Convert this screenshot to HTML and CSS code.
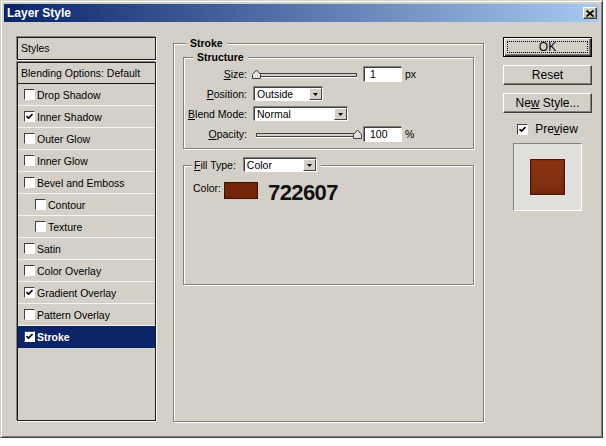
FILE: index.html
```html
<!DOCTYPE html>
<html>
<head>
    <meta charset="utf-8">
    <title>Layer Style</title>
    <link rel="stylesheet" href="styles.css">
</head>
<body>

    <div class="window">
        <div class="titlebar">
            <span class="title">Layer Style</span>
            <span class="closebtn">
                <svg width="8" height="7" viewBox="0 0 8 7"><path d="M0.5 0.5 L7.5 6.5 M7.5 0.5 L0.5 6.5" stroke="#000" stroke-width="1.7" fill="none"/></svg>
            </span>
        </div>

        <div class="main">
            <!-- left: list of effects -->
            <div class="leftcol">
                <div class="styleshead">Styles</div>
                <div class="stylelist">
                    <div class="blendrow">Blending Options: Default</div>
                    <div class="row"><span class="chk"></span>Drop Shadow</div>
                    <div class="row"><span class="chk"><svg width="7" height="7" viewBox="0 0 7 7"><path d="M0.5 3 L2.5 5 L6.5 1" fill="none" stroke="#000" stroke-width="1.6"/></svg></span>Inner Shadow</div>
                    <div class="row"><span class="chk"></span>Outer Glow</div>
                    <div class="row"><span class="chk"></span>Inner Glow</div>
                    <div class="row"><span class="chk"></span>Bevel and Emboss</div>
                    <div class="row sub"><span class="chk"></span>Contour</div>
                    <div class="row sub"><span class="chk"></span>Texture</div>
                    <div class="row"><span class="chk"></span>Satin</div>
                    <div class="row"><span class="chk"></span>Color Overlay</div>
                    <div class="row"><span class="chk"><svg width="7" height="7" viewBox="0 0 7 7"><path d="M0.5 3 L2.5 5 L6.5 1" fill="none" stroke="#000" stroke-width="1.6"/></svg></span>Gradient Overlay</div>
                    <div class="row"><span class="chk"></span>Pattern Overlay</div>
                    <div class="row selected"><span class="chk"><svg width="7" height="7" viewBox="0 0 7 7"><path d="M0.5 3 L2.5 5 L6.5 1" fill="none" stroke="#000" stroke-width="1.6"/></svg></span>Stroke</div>
                </div>
            </div>

            <!-- middle: stroke settings -->
            <div class="group stroke">
                <div class="grouptitle">Stroke</div>

                <div class="group structure">
                    <div class="grouptitle">Structure</div>

                    <div class="field">
                        <span class="lbl"><u>S</u>ize:</span>
                        <svg class="slider" width="110" height="11" viewBox="0 0 110 11">
                            <rect x="5.5" y="4.5" width="99" height="3" fill="#d4d0c8" stroke="#404040"/>
                            <line x1="5" y1="8.5" x2="106" y2="8.5" stroke="#fff"/>
                            <path d="M4.5 1 L8.5 5.5 L8.5 9.5 L0.5 9.5 L0.5 5.5 Z" fill="#e4e2de" stroke="#404040"/>
                        </svg>
                        <span class="textbox">1</span>
                        <span class="unit">px</span>
                    </div>

                    <div class="field">
                        <span class="lbl"><u>P</u>osition:</span>
                        <span class="select pos">
                            <span class="val">Outside</span>
                            <span class="arrow"><svg width="5" height="3" viewBox="0 0 5 3"><path d="M0 0 H5 L2.5 3 Z" fill="#000"/></svg></span>
                        </span>
                    </div>

                    <div class="field">
                        <span class="lbl"><u>B</u>lend Mode:</span>
                        <span class="select blend">
                            <span class="val">Normal</span>
                            <span class="arrow"><svg width="5" height="3" viewBox="0 0 5 3"><path d="M0 0 H5 L2.5 3 Z" fill="#000"/></svg></span>
                        </span>
                    </div>

                    <div class="field">
                        <span class="lbl"><u>O</u>pacity:</span>
                        <svg class="slider" width="110" height="11" viewBox="0 0 110 11">
                            <rect x="4.5" y="4.5" width="101" height="3" fill="#d4d0c8" stroke="#404040"/>
                            <line x1="4" y1="8.5" x2="106" y2="8.5" stroke="#fff"/>
                            <path d="M105.5 1 L109.5 5.5 L109.5 9.5 L101.5 9.5 L101.5 5.5 Z" fill="#e4e2de" stroke="#404040"/>
                        </svg>
                        <span class="textbox">100</span>
                        <span class="unit">%</span>
                    </div>
                </div>

                <div class="group fill">
                    <div class="grouptitle filltitle">
                        <span><u>F</u>ill Type:</span>
                        <span class="select filltype">
                            <span class="val">Color</span>
                            <span class="arrow"><svg width="5" height="3" viewBox="0 0 5 3"><path d="M0 0 H5 L2.5 3 Z" fill="#000"/></svg></span>
                        </span>
                    </div>

                    <div class="colorrow">
                        <span class="colorlbl">Color:</span>
                        <span class="swatch"></span>
                        <span class="hex">722607</span>
                    </div>
                </div>
            </div>

            <!-- right: buttons and preview -->
            <div class="rightcol">
                <div class="btn default"><span class="focus">OK</span></div>
                <div class="btn">Reset</div>
                <div class="btn"><span>Ne<u>w</u> Style...</span></div>
                <div class="preview">
                    <span class="chk"><svg width="7" height="7" viewBox="0 0 7 7"><path d="M0.5 3 L2.5 5 L6.5 1" fill="none" stroke="#000" stroke-width="1.6"/></svg></span>
                    <span>Pre<u>v</u>iew</span>
                </div>
                <div class="previewbox">
                    <div class="layer"></div>
                </div>
            </div>
        </div>
    </div>

</body>
</html>
```

FILE: styles.css
```css
body {
    margin: 0;
    background: #fff;
    font-family: "Liberation Sans", Arial, Helvetica, sans-serif;
    font-size: 10.5px;
    color: #000;
}

.window {
    width: 603px;
    height: 438px;
    box-sizing: border-box;
    background: #d4d0c8;
    border: 1px solid;
    border-color: #d4d0c8 #404040 #404040 #d4d0c8;
    box-shadow: inset 1px 1px #fff, inset -1px -1px #808080;
    padding: 3px;
}

/* title bar */
.titlebar {
    height: 18px;
    display: flex;
    align-items: center;
    justify-content: space-between;
    padding: 0 2px 0 3px;
    background: linear-gradient(to right, #0a246a, #a6caf0);
}

.title {
    color: #fff;
    font-weight: bold;
    font-size: 12px;
}

.closebtn {
    width: 14px;
    height: 12px;
    box-sizing: border-box;
    display: flex;
    align-items: center;
    justify-content: center;
    background: #d4d0c8;
    border: 1px solid;
    border-color: #fff #404040 #404040 #fff;
    box-shadow: inset -1px -1px #808080;
}

.main {
    display: flex;
    align-items: flex-start;
}

/* left column */
.leftcol {
    width: 139px;
    margin: 15px 0 0 13px;
}

.styleshead, .stylelist {
    box-sizing: border-box;
    border: 1px solid #1a1a1a;
    box-shadow: -1px -1px 0 #808080, 1px 1px 0 #fff;
}

.styleshead {
    height: 23px;
    line-height: 21px;
    padding-left: 3px;
    margin-bottom: 2px;
}

.stylelist {
    height: 359px;
}

.blendrow {
    height: 20px;
    line-height: 20px;
    padding-left: 3px;
    border-bottom: 1px solid #1a1a1a;
}

.row {
    height: 21px;
    display: flex;
    align-items: center;
    padding-left: 6px;
    border-bottom: 1px solid #f4f3f0;
}

    .row.sub {
        padding-left: 17px;
    }

    .row.selected {
        background: #0a246a;
        color: #fff;
        font-weight: bold;
        border-bottom-color: #0a246a;
    }

.chk {
    width: 11px;
    height: 11px;
    box-sizing: border-box;
    display: inline-flex;
    align-items: center;
    justify-content: center;
    background: #fff;
    border: 1px solid;
    border-color: #404040 #fff #fff #404040;
    margin-right: 2px;
    flex: none;
}

/* etched group boxes */
.group {
    box-sizing: border-box;
    border: 1px solid #808080;
    box-shadow: inset 1px 1px #fff, 1px 1px 0 #fff;
}

.grouptitle {
    width: max-content;
    margin-top: -8px;
    line-height: 14px;
    padding: 0 4px;
    background: #d4d0c8;
    font-weight: bold;
}

.stroke {
    width: 311px;
    height: 379px;
    margin: 21px 0 0 17px;
    padding: 0 9px;
}

    .stroke > .grouptitle {
        margin-left: 3px;
    }

.structure {
    height: 92px;
    margin-top: 7px;
}

    .structure > .grouptitle {
        margin-left: 9px;
    }

.field {
    height: 20px;
    display: flex;
    align-items: center;
}

.lbl {
    width: 63px;
    text-align: right;
}

.slider {
    margin-left: 5px;
    display: block;
}

.textbox {
    width: 38px;
    height: 15px;
    box-sizing: border-box;
    margin-left: 2px;
    padding-left: 5px;
    line-height: 13px;
    background: #fff;
    border: 1px solid;
    border-color: #404040 #fff #fff #404040;
    box-shadow: -1px -1px 0 #808080;
}

.unit {
    margin-left: 3px;
}

.select {
    height: 14px;
    box-sizing: border-box;
    display: flex;
    align-items: stretch;
    background: #fff;
    border: 1px solid;
    border-color: #404040 #fff #fff #404040;
    box-shadow: -1px -1px 0 #808080;
    font-weight: normal;
}

    .select .val {
        flex: 1;
        padding-left: 2px;
        line-height: 12px;
    }

    .select .arrow {
        width: 13px;
        box-sizing: border-box;
        display: flex;
        align-items: center;
        justify-content: center;
        background: #d4d0c8;
        border: 1px solid;
        border-color: #fff #404040 #404040 #fff;
    }

.pos {
    width: 69px;
    margin-left: 7px;
}

.blend {
    width: 94px;
    margin-left: 7px;
}

.fill {
    height: 120px;
    margin-top: 16px;
}

.filltitle {
    display: flex;
    align-items: center;
    margin-left: 8px;
    padding: 0 4px 0 2px;
    font-weight: normal;
}

.filltype {
    width: 73px;
    margin-left: 8px;
}

.colorrow {
    display: flex;
    align-items: flex-start;
    margin-top: 10px;
    padding-left: 9px;
}

.colorlbl {
    line-height: 13px;
}

.swatch {
    width: 34px;
    height: 17px;
    box-sizing: border-box;
    margin-left: 3px;
    background: #722607;
    border: 1px solid #3a1200;
}

.hex {
    margin-left: 10px;
    font-size: 22px;
    line-height: 22px;
    font-weight: bold;
    letter-spacing: -0.6px;
    color: #111;
}

/* right column */
.rightcol {
    width: 89px;
    margin: 15px 0 0 19px;
    display: flex;
    flex-direction: column;
    font-size: 12px;
}

.btn {
    height: 20px;
    box-sizing: border-box;
    display: flex;
    align-items: center;
    justify-content: center;
    margin-bottom: 8px;
    border: 1px solid;
    border-color: #fff #404040 #404040 #fff;
    box-shadow: inset -1px -1px #808080;
}

    .btn.default {
        border-color: #000;
        box-shadow: inset 1px 1px #fff, inset -1px -1px #404040, inset -2px -2px #808080;
        padding: 3px;
        align-items: stretch;
    }

.focus {
    flex: 1;
    display: flex;
    align-items: center;
    justify-content: center;
    border: 1px dotted #000;
}

.preview {
    display: flex;
    align-items: center;
    justify-content: center;
    height: 14px;
    margin-top: 1px;
}

    .preview .chk {
        margin-right: 7px;
    }

.previewbox {
    width: 69px;
    height: 68px;
    box-sizing: border-box;
    align-self: center;
    margin-top: 7px;
    display: flex;
    align-items: center;
    justify-content: center;
    background: #e2e0dc;
    border: 1px solid;
    border-color: #808080 #fff #fff #808080;
}

.layer {
    width: 35px;
    height: 36px;
    box-sizing: border-box;
    background: linear-gradient(#8a3513, #7a2b0c);
    border: 1px solid #4e1a06;
    box-shadow: inset 0 0 2px rgba(0, 0, 0, 0.45);
}
```
